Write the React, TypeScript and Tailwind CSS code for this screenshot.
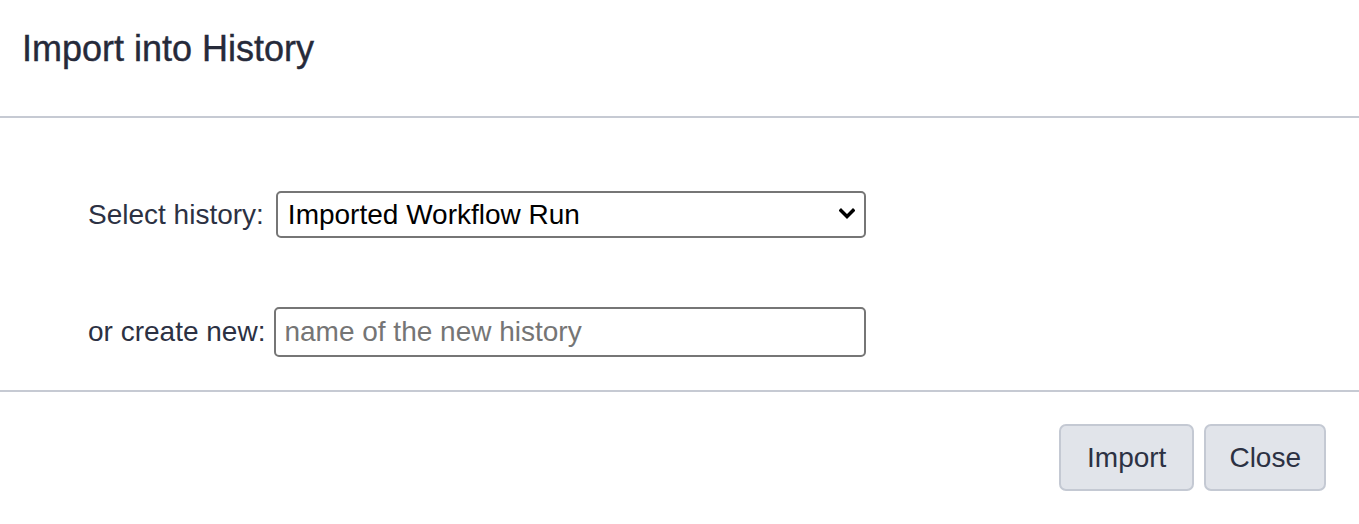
import React from 'react';

export default function App() {
  return (
    <div className="w-full h-[524px] bg-white flex flex-col text-[#2c3143]" style={{ fontFamily: '"Liberation Sans", Arial, sans-serif' }}>
      {/* Header */}
      <div className="h-[118px] shrink-0 border-b-2 border-[#c6cad3] pl-[22px] pt-[27px]">
        <h5 className="text-[36px] leading-[1.2] font-normal text-[#262a3a] [-webkit-text-stroke:0.4px_#262a3a]">Import into History</h5>
      </div>

      {/* Body */}
      <div className="h-[274px] shrink-0 border-b-2 border-[#c6cad3] pl-[88px] pt-[73px]">
        <div className="flex items-center">
          <label className="text-[28px] leading-none">Select history:</label>
          <div className="relative ml-[12px]">
            <select
              defaultValue="run"
              className="appearance-none w-[590px] h-[47px] border-2 border-[#767676] rounded-[5px] bg-white pl-[10px] text-[28px] text-black outline-none"
              style={{ fontFamily: '"Liberation Sans", Arial, sans-serif' }}
            >
              <option value="run">Imported Workflow Run</option>
            </select>
            <svg className="absolute right-[11px] top-[17px] pointer-events-none" width="16" height="12" viewBox="0 0 16 12">
              <path d="M2 2.5 L8 8.5 L14 2.5" fill="none" stroke="#000" strokeWidth="3.4" strokeLinecap="square" />
            </svg>
          </div>
        </div>
        <div className="flex items-center mt-[69px]">
          <label className="text-[28px] leading-none">or create new:</label>
          <input
            placeholder="name of the new history"
            className="ml-[9px] w-[592px] h-[50px] border-2 border-[#767676] rounded-[5px] bg-white pl-[8px] text-[28px] text-black placeholder:text-[#757575] outline-none"
            style={{ fontFamily: '"Liberation Sans", Arial, sans-serif' }}
          />
        </div>
      </div>

      {/* Footer */}
      <div className="flex-1 flex justify-end items-start pt-[32px] pr-[33px] gap-[10px]">
        <button className="h-[67px] px-[26px] rounded-[7px] border-2 border-[#c4c9d3] bg-[#e1e4ea] text-[28px] text-[#2c3143]">
          Import
        </button>
        <button className="h-[67px] px-[23px] rounded-[7px] border-2 border-[#c4c9d3] bg-[#e1e4ea] text-[28px] text-[#2c3143]">
          Close
        </button>
      </div>
    </div>
  );
}
